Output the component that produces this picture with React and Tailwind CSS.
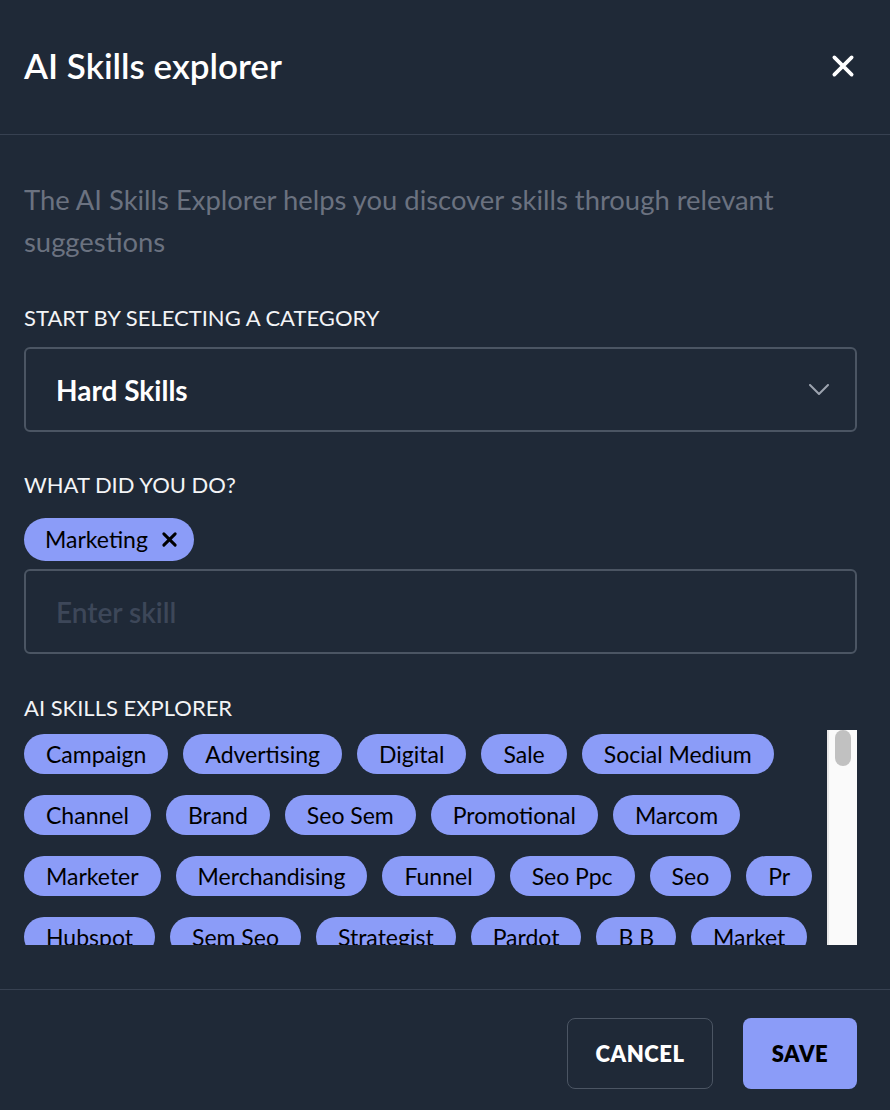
import React, { useState } from "react";

const suggestions = [
  "Campaign",
  "Advertising",
  "Digital",
  "Sale",
  "Social Medium",
  "Channel",
  "Brand",
  "Seo Sem",
  "Promotional",
  "Marcom",
  "Marketer",
  "Merchandising",
  "Funnel",
  "Seo Ppc",
  "Seo",
  "Pr",
  "Hubspot",
  "Sem Seo",
  "Strategist",
  "Pardot",
  "B B",
  "Market",
  "Outreach",
  "Branding",
];

const XIcon = ({ className, width = 3.4 }) => (
  <svg viewBox="0 0 24 24" fill="none" className={className}>
    <path d="M4 4L20 20M20 4L4 20" stroke="currentColor" strokeWidth={width} strokeLinecap="round" />
  </svg>
);

const App = () => {
  const [selected, setSelected] = useState(["Marketing"]);
  const [skill, setSkill] = useState("");

  return (
    <div className="min-h-screen bg-[#1f2937] font-['Lato',sans-serif] text-gray-100">
      {/* header */}
      <div className="h-[135px] pl-6 pr-[34px] flex items-center justify-between border-b border-[#374151]">
        <h1 className="text-[35px] font-semibold text-white leading-none -mt-[3px]">AI Skills explorer</h1>
        <button className="w-[26px] h-[26px] text-white -mt-[3px]">
          <XIcon className="w-[26px] h-[26px]" />
        </button>
      </div>

      <div className="pl-6 pr-[33px] pt-[44px]">
        <p className="text-[27.4px] leading-[42px] text-[#6b7280]">
          The AI Skills Explorer helps you discover skills through relevant suggestions
        </p>

        <div className="mt-[39px] text-[22px] leading-[32px] text-gray-100">START BY SELECTING A CATEGORY</div>
        <div className="mt-[13px] h-[85px] border-2 border-[#4b5563] rounded-md flex items-center justify-between pl-[30px] pr-[26px]">
          <span className="text-[28px] font-bold text-white">Hard Skills</span>
          <svg viewBox="0 0 20 11" fill="none" className="w-[20px] h-[11px] text-[#9ca3af]">
            <path d="M1 1L10 10L19 1" stroke="currentColor" strokeWidth="2" strokeLinecap="round" strokeLinejoin="round" />
          </svg>
        </div>

        <div className="mt-[37px] text-[22px] leading-[32px] text-gray-100">WHAT DID YOU DO?</div>
        <div className="mt-[17px] flex gap-2">
          {selected.map((s) => (
            <span
              key={s}
              className="h-[43px] rounded-full bg-[#8b9cf8] text-black text-[23px] flex items-center pl-[21px] pr-[16px] gap-[13px]"
            >
              {s}
              <button onClick={() => setSelected(selected.filter((x) => x !== s))}>
                <XIcon className="w-[17px] h-[17px]" width={4.2} />
              </button>
            </span>
          ))}
        </div>
        <input
          value={skill}
          onChange={(e) => setSkill(e.target.value)}
          placeholder="Enter skill"
          className="mt-[8px] w-full h-[85px] border-2 border-[#4b5563] rounded-md bg-transparent pl-[30px] text-[28px] font-semibold text-white placeholder:text-[#3d4759] outline-none"
        />

        <div className="mt-[38px] text-[22px] leading-[32px] text-gray-100">AI SKILLS EXPLORER</div>
        <div className="mt-[6px] h-[215px] flex">
          <div className="flex-1 overflow-hidden pt-1 flex flex-wrap content-start gap-x-[15px] gap-y-[21px]">
            {suggestions.map((s) => (
              <span
                key={s}
                className="h-[40px] rounded-full bg-[#8b9cf8] text-black text-[23px] px-[22px] flex items-center"
              >
                {s}
              </span>
            ))}
          </div>
          <div className="w-[30px] bg-[#fafafa] border-l-2 border-[#e8e8e8] flex justify-center">
            <div className="w-[16px] h-[36px] rounded-full bg-[#c1c1c1]" />
          </div>
        </div>
      </div>

      {/* footer */}
      <div className="mt-[44px] border-t border-[#374151] pl-6 pr-[33px] pt-[28px] pb-[21px] flex justify-end gap-[30px]">
        <button className="w-[146px] h-[71px] rounded-lg border border-[#4b5563] text-white text-[22px] font-extrabold tracking-wide">
          CANCEL
        </button>
        <button className="w-[114px] h-[71px] rounded-lg bg-[#8b9cf8] text-black text-[22px] font-extrabold tracking-wide">
          SAVE
        </button>
      </div>
    </div>
  );
};

export default App;
